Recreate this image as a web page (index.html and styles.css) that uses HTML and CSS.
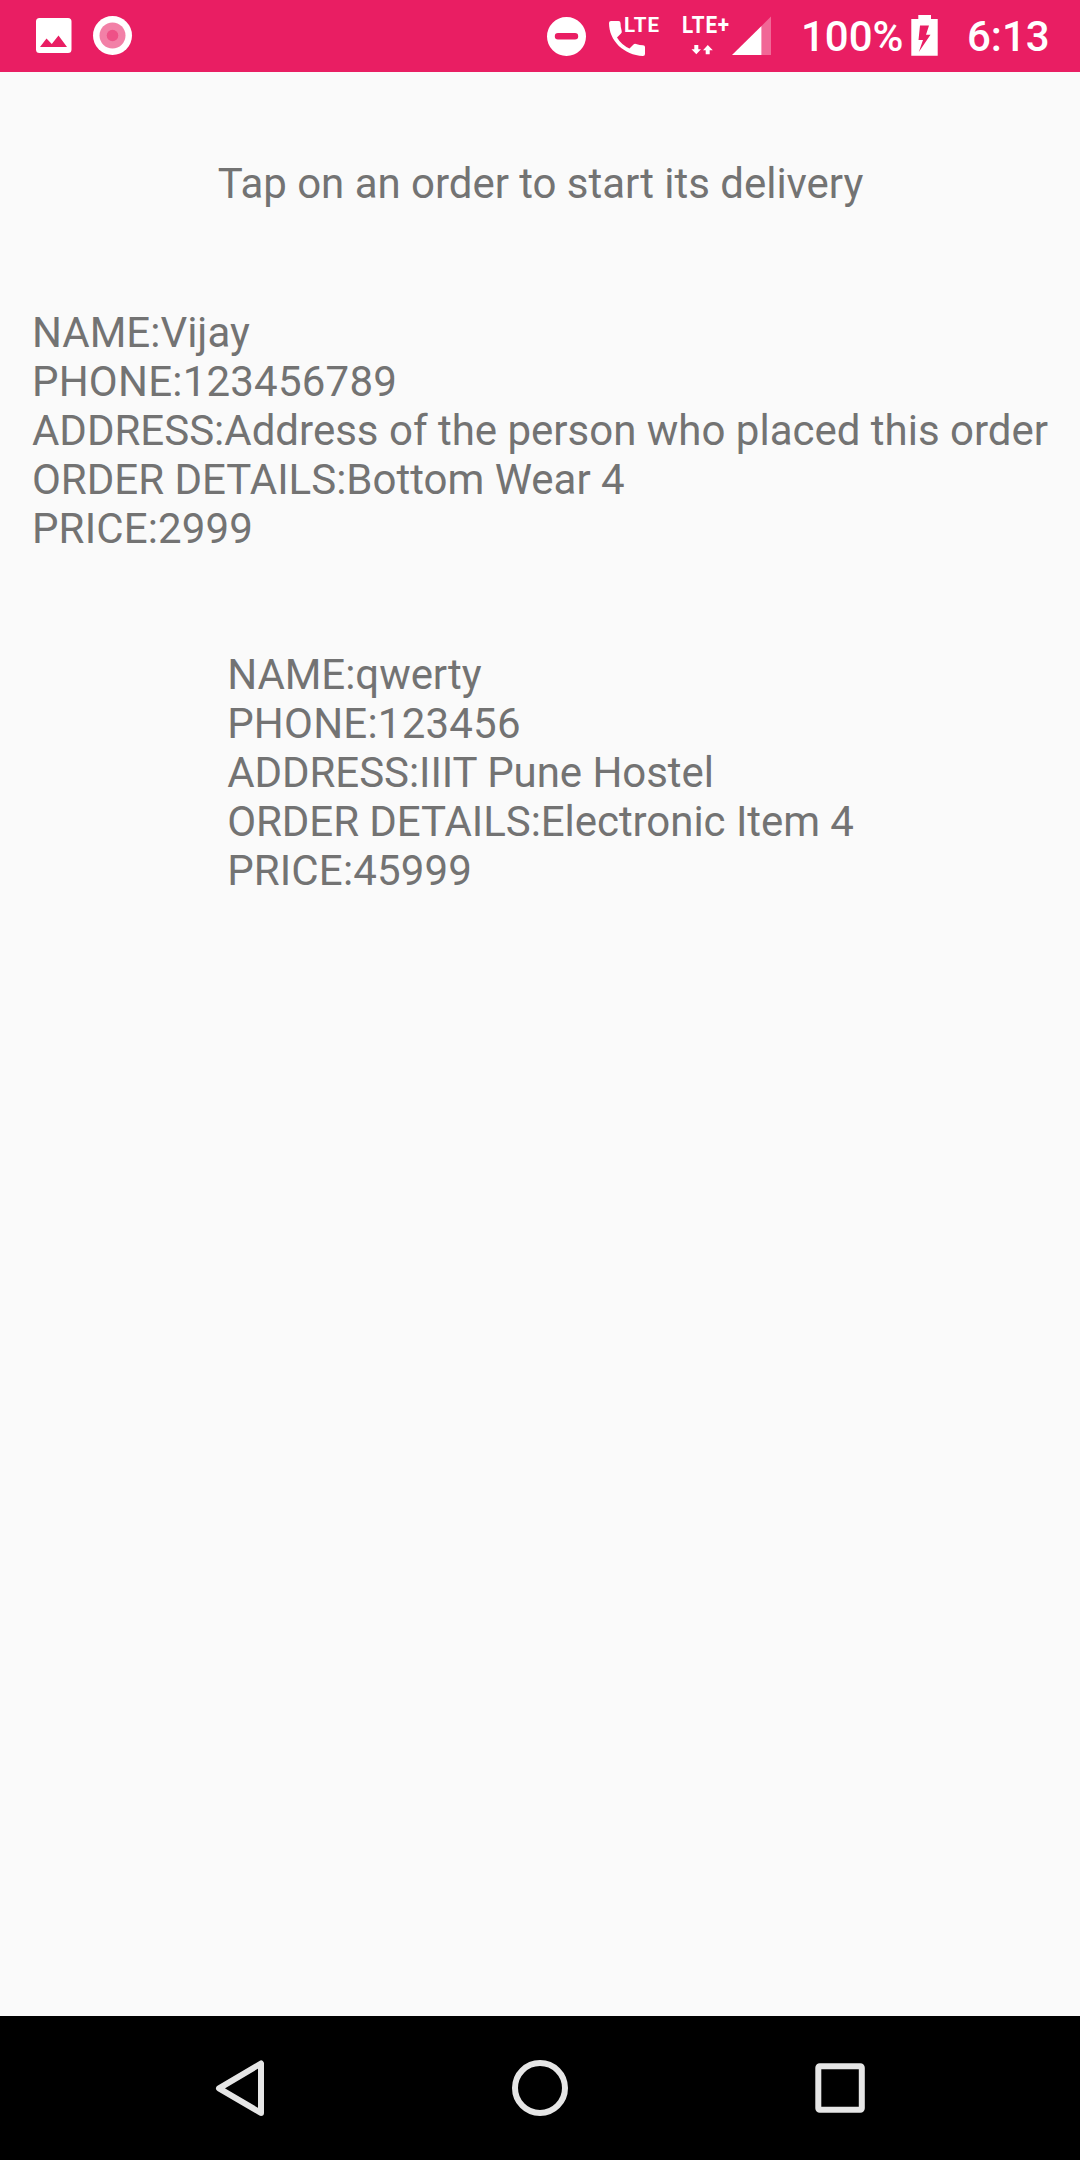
FILE: index.html
```html
<!DOCTYPE html>
<html lang="en">
<head>
<meta charset="utf-8">
<title>Orders</title>
<link rel="stylesheet" href="styles.css">
</head>
<body>
<header class="status">
  <div class="notifications">
    <svg width="36" height="72" viewBox="36 0 36 72"><path fill="#fff" fill-rule="evenodd" d="M39.500 18H68Q71.500 18 71.500 21.500V49.500Q71.500 53 68 53H39.500Q36 53 36 49.500V21.500Q36 18 39.500 18ZM40 47H67L58.500 35.500L51.800 44L46.500 38.500Z"/></svg>
    <svg width="41" height="72" viewBox="92 0 41 72"><circle cx="112.500" cy="35.500" r="19.500" fill="#fff"/><circle cx="112.500" cy="35.500" r="13" fill="#f280a7"/><circle cx="112.500" cy="35.500" r="5.800" fill="#ee5187"/></svg>
  </div>
  <div class="system">
    <svg width="40" height="72" viewBox="546 0 40 72"><path fill="#fff" fill-rule="evenodd" d="M566.500 17A19.500 19.500 0 1 1 566.500 56A19.500 19.500 0 1 1 566.500 17ZM558 33A3.200 3.200 0 0 0 558 39.400H575A3.200 3.200 0 0 0 575 33Z"/></svg>
    <svg class="call" width="52" height="72" viewBox="608 0 52 72"><path fill="#fff" d="M611 21H618.500Q620.500 21 620.500 23Q620.500 27 621.700 31Q622.100 32.500 621 33.500L617 37.500Q621.500 45 629.500 48.500L633.500 44.500Q634.500 43.500 636 44Q640 45.300 643 45.300Q645 45.300 645 47V54Q645 56 643 56C624 55 609 41 609 23Q609 21 611 21Z"/><text class="net" x="624" y="32" font-size="21" textLength="36" lengthAdjust="spacingAndGlyphs">LTE</text></svg>
    <svg class="data" width="90" height="72" viewBox="682 0 90 72"><text class="net" x="682" y="33" font-size="23.500" textLength="48" lengthAdjust="spacingAndGlyphs">LTE+</text><path fill="#fff" d="M694.300 45H698.300V49.200H701L696.300 54.300L691.500 49.200H694.300ZM705.700 54.300H709.700V50.300H712.800L707.800 45L703 50.300H705.700Z"/><path fill="#f380a7" fill-opacity=".75" d="M761.500 26L771 16.500V55H761.500Z"/><path fill="#fff" d="M732 55L761.500 26V55Z"/></svg>
    <span class="level">100%</span>
    <svg class="battery" width="27" height="72" viewBox="911 0 27 72"><path fill="#fff" fill-rule="evenodd" d="M918.300 15H931V19H937.700V55.700H911.300V19H918.300ZM920 25.500L918.500 40H923L918.800 52L930.500 34.800H926L929 25.500Z"/></svg>
    <span class="clock">6:13</span>
  </div>
</header>
<main class="content">
  <p class="hint">Tap on an order to start its delivery</p>
  <section class="order">
    <div>NAME:Vijay</div>
    <div class="phone">PHONE:123456789</div>
    <div>ADDRESS:Address of the person who placed this order</div>
    <div>ORDER DETAILS:Bottom Wear 4</div>
    <div class="price">PRICE:2999</div>
  </section>
  <section class="order compact">
    <div>NAME:qwerty</div>
    <div class="phone">PHONE:123456</div>
    <div>ADDRESS:IIIT Pune Hostel</div>
    <div>ORDER DETAILS:Electronic Item 4</div>
    <div class="price">PRICE:45999</div>
  </section>
</main>
<nav class="navbar">
  <svg width="60" height="60" viewBox="210 2058 60 60"><path d="M219 2088.300L261 2063.500V2113Z"/></svg>
  <svg width="60" height="60" viewBox="510 2058 60 60"><circle cx="540" cy="2088" r="25"/></svg>
  <svg width="60" height="60" viewBox="810 2058 60 60"><rect x="818.300" y="2066.300" width="43.500" height="43.500" rx="1.500"/></svg>
</nav>
</body>
</html>
```
FILE: styles.css
```css
body {
  margin: 0;
  height: 2160px;
  display: flex;
  flex-direction: column;
  background: #fafafa;
  font-family: Roboto, sans-serif;
}
svg { display: block; flex: none; }
.status {
  height: 72px;
  box-sizing: border-box;
  padding: 0 30px 0 36px;
  display: flex;
  justify-content: space-between;
  background: #e91e63;
  color: #fff;
  font-size: 42px;
  font-weight: 500;
  line-height: 74px;
}
.notifications { display: flex; gap: 20px; }
.system { display: flex; }
.net {
  fill: #fff;
  font-family: Roboto, sans-serif;
  font-weight: 700;
  letter-spacing: 1px;
}
.call { margin-left: 22px; }
.data { margin-left: 22px; }
.level { width: 110px; margin-left: 29px; white-space: nowrap; }
.clock { width: 83px; margin-left: 29px; white-space: nowrap; }
.content {
  flex: 1;
  display: flex;
  flex-direction: column;
  align-items: center;
  color: #737373;
  font-size: 42px;
  line-height: 49px;
}
.hint { margin: 87px 0 100px; padding-left: 1px; letter-spacing: -0.03px; }
.order { white-space: nowrap; margin-bottom: 97px; }
.compact { padding-left: 1px; letter-spacing: -0.05px; }
.phone { letter-spacing: 0.22px; }
.price { letter-spacing: 0.15px; }
.navbar {
  height: 144px;
  display: flex;
  align-items: center;
  justify-content: center;
  gap: 240px;
  background: #000;
}
.navbar svg {
  fill: none;
  stroke: #e6e6e6;
  stroke-width: 6;
  stroke-linejoin: round;
}
```
